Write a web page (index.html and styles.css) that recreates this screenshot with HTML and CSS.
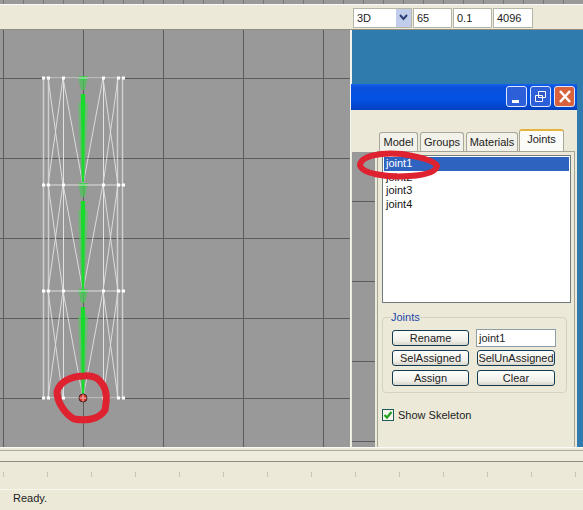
FILE: index.html
```html
<!DOCTYPE html>
<html lang="en">
<head>
<meta charset="utf-8">
<title>Joints</title>
<link rel="stylesheet" href="styles.css">
</head>
<body>
<div class="app">
  <div class="top-strip"></div>
  <div class="toolbar">
    <div class="combo"><span class="combo-text">3D</span>
      <span class="combo-btn"><svg width="15" height="17" viewBox="0 0 15 17"><path d="M4 6l3.5 4L11 6" fill="none" stroke="#2c3f78" stroke-width="2"/></svg></span>
    </div>
    <div class="field f1">65</div>
    <div class="field f2">0.1</div>
    <div class="field f3">4096</div>
  </div>
  <div class="main">
    <div class="canvas">
      <svg class="mesh" width="350" height="417" viewBox="0 30 350 417">
        <defs>
          <g id="seg" fill="none" stroke="#dcdcdc" stroke-width="1">
            <path d="M63 78L83 185M103 78L83 185M48 78L63 185M118 78L103 185M63 78L48 185M103 78L118 185"/>
          </g>
          <g id="row">
            <path d="M44 0H122" stroke="#dedede" stroke-width="1"/>
            <path d="M42 -1.500h3v3h-3zM47 -1.500h3v3h-3zM62 -1.500h3v3h-3zM102 -1.500h3v3h-3zM117 -1.500h3v3h-3zM122 -1.500h3v3h-3z" fill="#fff"/>
          </g>
          <g id="bone">
            <path d="M83 100L88 104L85 175L83 187L81 175L78 104Z" fill="#5fbf68" opacity=".7"/>
            <path d="M80.800 94H85.200L84 182H82Z" fill="#17dc2c"/>
            <path d="M78 76H88L85 90H81Z" fill="#4fc25a" opacity=".8"/>
            <path d="M81 76.500H85V80H81Z" fill="#22d838"/>
          </g>
        </defs>
        <g fill="none" stroke="#cfcfcf" stroke-width="1.500">
          <path d="M43.500 78V398M48.500 78V398M122.500 78V398M117.500 78V398"/>
        </g>
        <path d="M63.500 78V398M103.500 78V398" fill="none" stroke="#e2e2e2" stroke-width="1"/>
        <use href="#seg"/>
        <use href="#seg" transform="translate(0 106)"/>
        <use href="#seg" transform="translate(0 213)"/>
        <use href="#bone"/>
        <use href="#bone" transform="translate(0 107)"/>
        <use href="#bone" transform="translate(0 213)"/>
        <use href="#row" transform="translate(0 78)"/>
        <use href="#row" transform="translate(0 185)"/>
        <use href="#row" transform="translate(0 291)"/>
        <use href="#row" transform="translate(0 398)"/>
        <circle cx="83" cy="398" r="4" fill="#d8322c" stroke="#4a2020" stroke-width="1"/>
        <path d="M83 394.500V401.500M79.500 398H86.500" stroke="#f3c0b8" stroke-width="1"/>
      </svg>
    </div>
    <div class="splitter"></div>
    <div class="desktop">
      <div class="window">
        <div class="titlebar">
          <span class="cap cap-min"><svg width="18" height="19" viewBox="0 0 18 19"><path d="M4 13h7v3H4z" fill="#fff"/></svg></span>
          <span class="cap cap-max"><svg width="18" height="19" viewBox="0 0 18 19"><path d="M6.500 4.500h7v6h-7zM3.500 8.500h7v6h-7z" fill="#3058c8" stroke="#fff"/></svg></span>
          <span class="cap cap-close"><svg width="18" height="19" viewBox="0 0 18 19"><path d="M4 4l10 11M14 4L4 15" stroke="#fff" stroke-width="2.500"/></svg></span>
        </div>
        <div class="tabs">
          <div class="tab t-model">Model</div>
          <div class="tab t-groups">Groups</div>
          <div class="tab t-materials">Materials</div>
          <div class="tab tab-active">Joints</div>
        </div>
        <div class="win-body">
          <div class="side"></div>
          <div class="page">
            <ul class="list">
              <li class="sel">joint1</li>
              <li>joint2</li>
              <li>joint3</li>
              <li>joint4</li>
            </ul>
            <fieldset class="group">
              <legend>Joints</legend>
              <div class="group-grid">
                <button class="btn">Rename</button>
                <div class="edit">joint1</div>
                <button class="btn">SelAssigned</button>
                <button class="btn">SelUnAssigned</button>
                <button class="btn">Assign</button>
                <button class="btn">Clear</button>
              </div>
            </fieldset>
            <div class="check-row">
              <span class="check"><svg width="10" height="10" viewBox="0 0 10 10"><path d="M1.500 5l2.500 2.500L8.500 2" fill="none" stroke="#21a121" stroke-width="2.200"/></svg></span>
              <span>Show Skeleton</span>
            </div>
          </div>
        </div>
      </div>
    </div>
  </div>
  <div class="band-a"></div>
  <div class="band-b"></div>
  <div class="ruler">
    <i></i><i></i><i></i><i></i><i></i><i></i><i></i><i></i><i></i><i></i><i></i><i></i><i></i><i></i>
  </div>
  <div class="status">Ready.</div>
  <svg class="scribble" width="583" height="510" viewBox="0 0 583 510">
    <path d="M402 154C380 152 361 156 360 165C361 173 385 178 410 176C425 175 436 172 437 166C435 161 420 157 402 154Z" fill="none" stroke="#df2230" stroke-width="6"/>
    <path d="M84 376C71 376 59 382 57 392C57 402 65 414 74 419C85 421 99 420 105 410C107 400 107 391 103 385C99 378 93 375 84 376Z" fill="none" stroke="#df2230" stroke-width="7"/>
  </svg>
</div>
</body>
</html>
```
FILE: styles.css
```css
* { box-sizing: border-box; }
html, body { margin: 0; padding: 0; background: #ece9d8; }
.app {
  position: relative;
  width: 583px;
  height: 510px;
  overflow: hidden;
  display: flex;
  flex-direction: column;
  font: 11px "Liberation Sans", Arial, sans-serif;
  color: #222;
  background: #ece9d8;
}
.top-strip {
  height: 5px;
  flex: none;
  background-color: #999;
  background-image: repeating-linear-gradient(to right, transparent 0 3px, #777 3px 4px, transparent 4px 20px);
  border-bottom: 1px solid #fbfbf4;
}
.toolbar {
  height: 25px;
  flex: none;
  display: flex;
  padding: 3px 0 0 353px;
  gap: 1px;
  background: #ece9d8;
  border-bottom: 1px solid #8f8d80;
}
.combo {
  width: 59px;
  height: 20px;
  display: flex;
  align-items: center;
  justify-content: space-between;
  background: #fff;
  border: 1px solid #b5b5a8;
  padding-left: 3px;
}
.combo-btn {
  width: 15px;
  height: 18px;
  background: #c1cdea;
  display: block;
}
.combo-btn svg { display: block; }
.field {
  height: 20px;
  background: #fff;
  border: 1px solid #b5b5a8;
  padding: 2px 3px;
  line-height: 14px;
}
.f1 { width: 39px; }
.f2 { width: 39px; }
.f3 { width: 40px; }
.main {
  height: 417px;
  flex: none;
  display: flex;
}
.canvas {
  width: 350px;
  flex: none;
  background-color: #999;
  background-image:
    repeating-linear-gradient(to right, transparent 0 3px, #5c5c5c 3px 4px, transparent 4px 80px),
    repeating-linear-gradient(to bottom, transparent 0 48px, #5c5c5c 48px 49px, transparent 49px 80px);
}
.mesh { display: block; filter: blur(.4px); }
.splitter {
  width: 2px;
  flex: none;
  background: #f4f4ee;
}
.desktop {
  flex: 1;
  background: #2f7bae;
  padding-top: 54px;
  min-width: 0;
}
.window {
  width: 226px;
  margin-left: -1px;
  height: 363px;
  display: flex;
  flex-direction: column;
  background: #ece9d8;
  position: relative;
}
.titlebar {
  height: 26px;
  flex: none;
  display: flex;
  justify-content: flex-end;
  gap: 3px;
  padding: 2px 2px 0 0;
  background: linear-gradient(#1565ee 0, #0a4fdc 12%, #0353e4 55%, #0040c0 100%);
}
.cap {
  width: 21px;
  height: 21px;
  border: 1px solid #dfe8fb;
  border-radius: 3px;
  background: #2d5fd8;
  display: flex;
  align-items: center;
  justify-content: center;
}
.cap-close { background: #d9623c; }
.tabs {
  height: 41px;
  flex: none;
  display: flex;
  align-items: flex-end;
  padding: 0 0 0 28px;
  gap: 2px;
  position: relative;
}
.tab {
  height: 19px;
  border: 1px solid #a8a89a;
  border-bottom: none;
  border-radius: 3px 3px 0 0;
  background: #f3f2ea;
  text-align: center;
  line-height: 18px;
}
.t-model { width: 39px; }
.t-groups { width: 44px; }
.t-materials { width: 52px; }
.tab-active {
  width: 45px;
  height: 22px;
  margin-left: -1px;
  background: #fbfbf8;
  border-top: 2px solid #e8b33a;
  line-height: 17px;
}
.win-body {
  flex: 1;
  display: flex;
  min-height: 0;
}
.side {
  width: 23px;
  flex: none;
  margin: 1px 0 0 1px;
  background-color: #999;
  background-image: repeating-linear-gradient(to bottom, transparent 0 49px, #5c5c5c 49px 50px, transparent 50px 80px);
}
.page {
  width: 198px;
  flex: none;
  margin-left: 2px;
  border: 1px solid #a5a597;
  border-bottom: none;
  padding: 3px 4px 0 4px;
  background: #ece9d8;
}
.list {
  list-style: none;
  margin: 0 0 0 0;
  padding: 1px;
  width: 189px;
  height: 148px;
  background: #fff;
  border: 1px solid #6f7c80;
}
.list li {
  height: 13.500px;
  line-height: 13px;
  padding-left: 2px;
  color: #151515;
}
.list .sel {
  background: #2f63c0;
  color: #fff;
}
.group {
  margin: 8px 0 0 0;
  width: 185px;
  height: 82px;
  padding: 6px 9px 0 9px;
  border: 1px solid #d4d2c0;
  border-radius: 4px;
}
.group legend {
  padding: 0;
  margin-left: -1px;
  color: #1c47a8;
  line-height: 13px;
}
.group-grid {
  display: grid;
  grid-template-columns: 77px 78px;
  grid-auto-rows: 16px;
  column-gap: 8px;
  row-gap: 4px;
}
.btn {
  font: inherit;
  padding: 0;
  margin: 0;
  height: 16px;
  color: #222;
  line-height: 14px;
  background: linear-gradient(#ffffff, #f0efe8 70%, #d8d6ca);
  border: 1px solid #123a52;
  border-radius: 3px;
  white-space: nowrap;
  overflow: visible;
}
.edit {
  height: 18px;
  margin: -1px -1px 0;
  background: #fff;
  border: 1px solid #8f9ea6;
  padding-left: 2px;
  line-height: 16px;
}
.check-row {
  display: flex;
  align-items: center;
  gap: 4px;
  margin: 16px 0 0 0;
}
.check {
  width: 12px;
  height: 12px;
  background: #f4f4ec;
  border: 1px solid #1d5a5a;
  display: block;
}
.check svg { display: block; }
.band-a {
  height: 4px;
  flex: none;
  border-top: 1px solid #fbfbf4;
  border-bottom: 1px solid #a8a89c;
}
.band-b {
  height: 11px;
  flex: none;
  background: #efecdd;
  border-bottom: 1px solid #8f8d80;
}
.ruler {
  height: 28px;
  flex: none;
  display: flex;
  gap: 43px;
  padding: 10px 0 0 3px;
  border-bottom: 1px solid #f7f6ec;
}
.ruler i {
  width: 1px;
  height: 5px;
  flex: none;
  background: #c6c4b5;
}
.status {
  flex: 1;
  padding: 1px 0 0 13px;
  line-height: 14px;
}
.scribble {
  position: absolute;
  left: 0;
  top: 0;
  pointer-events: none;
}
```
